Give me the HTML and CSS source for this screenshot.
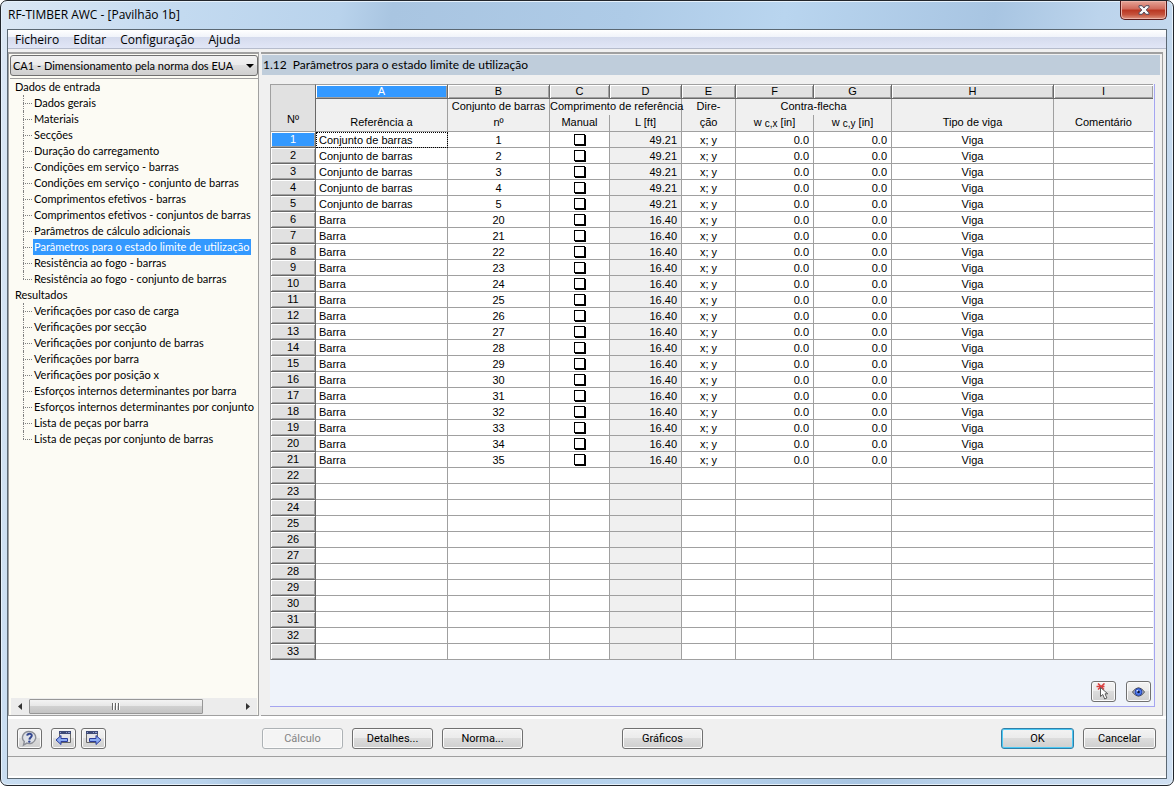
FILE: index.html
```html
<!DOCTYPE html>
<html lang="pt">
<head>
<meta charset="utf-8">
<title>RF-TIMBER AWC - [Pavilhão 1b]</title>
<link rel="stylesheet" href="styles.css">
</head>
<body>
<div class="window">
  <header class="titlebar">
    <h1 class="title">RF-TIMBER AWC - [Pavilhão 1b]</h1>
    <button class="close" type="button" aria-label="Fechar">
      <svg width="12" height="10" viewBox="0 0 12 10"><path d="M1 .7h3.2L6 3 7.800.7H11v1.500L8.200 5 11 7.800v1.500H7.800L6 7 4.200 9.300H1V7.800L3.800 5 1 2.200z" fill="#f8f8f8" stroke="#4d4a5c" stroke-width="1"/></svg>
    </button>
  </header>
  <div class="client">
    <nav class="menubar">
      <button type="button">Ficheiro</button>
      <button type="button">Editar</button>
      <button type="button">Configuração</button>
      <button type="button">Ajuda</button>
    </nav>
    <div class="body">
      <aside class="side">
        <div class="combo">
          <select aria-label="Caso de dimensionamento"><option>CA1 - Dimensionamento pela norma dos EUA</option></select>
        </div>
        <div class="tree">
          <p class="branch">Dados de entrada</p>
          <ul class="leaves">
            <li><a href="#">Dados gerais</a></li>
            <li><a href="#">Materiais</a></li>
            <li><a href="#">Secções</a></li>
            <li><a href="#">Duração do carregamento</a></li>
            <li><a href="#">Condições em serviço - barras</a></li>
            <li><a href="#">Condições em serviço - conjunto de barras</a></li>
            <li><a href="#">Comprimentos efetivos - barras</a></li>
            <li><a href="#">Comprimentos efetivos - conjuntos de barras</a></li>
            <li><a href="#">Parâmetros de cálculo adicionais</a></li>
            <li><a href="#" class="active">Parâmetros para o estado limite de utilização</a></li>
            <li><a href="#">Resistência ao fogo - barras</a></li>
            <li><a href="#">Resistência ao fogo - conjunto de barras</a></li>
          </ul>
          <p class="branch">Resultados</p>
          <ul class="leaves">
            <li><a href="#">Verificações por caso de carga</a></li>
            <li><a href="#">Verificações por secção</a></li>
            <li><a href="#">Verificações por conjunto de barras</a></li>
            <li><a href="#">Verificações por barra</a></li>
            <li><a href="#">Verificações por posição x</a></li>
            <li><a href="#">Esforços internos determinantes por barra</a></li>
            <li><a href="#">Esforços internos determinantes por conjunto de barras</a></li>
            <li><a href="#">Lista de peças por barra</a></li>
            <li><a href="#">Lista de peças por conjunto de barras</a></li>
          </ul>
        </div>
        <div class="scrollbar">
          <button type="button" aria-label="Esquerda"><svg width="4" height="7" viewBox="0 0 4 7"><path d="M4 0v7L0 3.500z" fill="#333"/></svg></button>
          <div class="track"><div class="thumb"><svg width="8" height="7" viewBox="0 0 8 7"><path d="M.5 0v7M3.500 0v7M6.500 0v7" stroke="#666"/><path d="M1.500 0v7M4.500 0v7M7.500 0v7" stroke="#fff"/></svg></div></div>
          <button type="button" aria-label="Direita"><svg width="4" height="7" viewBox="0 0 4 7"><path d="M0 0v7l4-3.500z" fill="#333"/></svg></button>
        </div>
      </aside>
      <main class="main">
        <h2 class="heading">1.12&nbsp; Parâmetros para o estado limite de utilização</h2>
        <div class="gridpanel">
          <table class="grid">
            <colgroup><col class="w-n"><col class="w-a"><col class="w-b"><col class="w-c"><col class="w-d"><col class="w-e"><col class="w-f"><col class="w-f"><col class="w-h"><col></colgroup>
            <thead>
              <tr class="letters"><th rowspan="3" class="corner">Nº</th><th class="picked">A</th><th>B</th><th>C</th><th>D</th><th>E</th><th>F</th><th>G</th><th>H</th><th>I</th></tr>
              <tr class="names"><th></th><th>Conjunto de barras</th><th colspan="2">Comprimento de referência</th><th>Dire-</th><th colspan="2">Contra-flecha</th><th></th><th></th></tr>
              <tr class="names last"><th>Referência a</th><th>nº</th><th>Manual</th><th>L [ft]</th><th>ção</th><th>w <sub>c,x</sub> [in]</th><th>w <sub>c,y</sub> [in]</th><th>Tipo de viga</th><th>Comentário</th></tr>
            </thead>
            <tbody id="rows"></tbody>
          </table>
          <div class="gridtools">
            <button class="btn icon" type="button" aria-label="Selecionar">
              <svg width="15" height="17" viewBox="0 0 15 17"><path d="M2 .5l6 6M8.500 .5L2 6.500M.5 3.500h8" stroke="#d94040" stroke-width="1.600"/><path d="M4.500 4.500v9l2.300-2 1.900 4.500 2.200-1-1.900-4.200h2.800z" fill="#fff" stroke="#5a5a5a"/></svg>
            </button>
            <button class="btn icon" type="button" aria-label="Ver">
              <svg width="13" height="10" viewBox="0 0 13 10"><path d="M.5 5Q6.500-3.500 12.500 5 6.500 13.500 .5 5z" fill="#b9bfd2" stroke="#444"/><circle cx="6.500" cy="5" r="3.500" fill="#4f7bee" stroke="#2743a6"/><circle cx="6.500" cy="5" r="1.300" fill="#0c1238"/><circle cx="5.300" cy="3.800" r=".7" fill="#fff"/></svg>
            </button>
          </div>
        </div>
      </main>
    </div>
    <footer class="actions">
      <div class="nav">
        <button class="btn icon help" type="button" aria-label="Ajuda">
          <svg width="17" height="17" viewBox="0 0 17 17"><path d="M8.500 1.500a6.500 6 0 1 1-2.600 11.600L2.500 15l.8-3.400A6.500 6 0 0 1 8.500 1.500z" fill="#dfe2e8" stroke="#8b8e96" stroke-width="1.400"/><path d="M6.200 5.600C6.500 3.200 10.900 3.200 10.800 5.600c0 1.900-2.300 1.900-2.400 4" fill="none" stroke="#33468f" stroke-width="2"/><circle cx="8.300" cy="11.600" r="1.200" fill="#33468f"/></svg>
        </button>
        <button class="btn icon" type="button" aria-label="Anterior">
          <svg width="17" height="17" viewBox="0 0 17 17"><path d="M4.500 2.500h11v10h-11z" fill="#e4e4e8" stroke="#666"/><path d="M4 1h12v3H4z" fill="#3e4a76"/><path d="M5 2.500h1M11 2.500h1M13 2.500h2" stroke="#8e9cd0"/><path d="M1 10L6 5.500v3h6.500v3H6v3z" fill="#8aaaf2" stroke="#2b3c9c"/></svg>
        </button>
        <button class="btn icon" type="button" aria-label="Seguinte">
          <svg width="17" height="17" viewBox="0 0 17 17"><path d="M1.500 2.500h11v10h-11z" fill="#e4e4e8" stroke="#666"/><path d="M1 1h12v3H1z" fill="#3e4a76"/><path d="M2 2.500h1M8 2.500h1M10 2.500h2" stroke="#8e9cd0"/><path d="M16 10L11 5.500v3H4.500v3H11v3z" fill="#8aaaf2" stroke="#2b3c9c"/></svg>
        </button>
      </div>
      <button class="btn" type="button" disabled>Cálculo</button>
      <button class="btn" type="button">Detalhes...</button>
      <button class="btn" type="button">Norma...</button>
      <button class="btn graphics" type="button">Gráficos</button>
      <div class="confirm">
        <button class="btn default" type="button">OK</button>
        <button class="btn" type="button">Cancelar</button>
      </div>
    </footer>
    <div class="status"></div>
  </div>
</div>
<script src="grid.js"></script>
</body>
</html>
```
FILE: styles.css
```css
* { box-sizing: border-box; }
body {
  margin: 0;
  background: #fff;
  color: #000;
  font: 11px/16px Roboto, "Noto Sans", sans-serif;
}
button, select, input { font: inherit; color: inherit; margin: 0; }
h1, h2, p, ul { margin: 0; padding: 0; font-weight: normal; }
ul { list-style: none; }
svg { display: block; }

.window {
  display: flex;
  flex-direction: column;
  height: 100vh;
  padding: 0 6px 6px;
  border: 1px solid #22262c;
  border-radius: 7px;
  background: linear-gradient(100deg, #dbe7f4 0, #c3daf0 14%, #b9d3ec 26%, #a9c5e1 30%, #aecbe7 48%, #b9d5ef 60%, #a8c5e2 76%, #bcd4ec 84%, #d0e0f2 100%);
  box-shadow: inset 0 0 0 1px #e6f1fb;
}
.titlebar {
  display: flex;
  justify-content: space-between;
  align-items: center;
  flex: none;
  height: 28px;
}
.title { font: 12px/16px "Open Sans", sans-serif; padding-left: 1px; }
.close {
  display: grid;
  place-items: center;
  align-self: flex-start;
  width: 47px;
  height: 19px;
  padding: 0;
  border: 1px solid #571b1b;
  border-top: 0;
  border-radius: 0 0 5px 5px;
  background: linear-gradient(#e6a497, #d0695a 45%, #b93621 50%, #c5523c 75%, #dd9480);
  box-shadow: inset 0 0 0 1px #ecb3a8;
}
.client {
  display: flex;
  flex-direction: column;
  flex: 1;
  min-height: 0;
  border: 1px solid #5b6873;
  background: #f0f0f0;
}
.menubar {
  display: flex;
  flex: none;
  height: 19px;
  border-bottom: 1px solid #b6bccc;
  background: linear-gradient(#fff 0, #f1f4fa 38%, #d5dbed 40%, #e1e6f6 100%);
}
.menubar button {
  padding: 2px 7px 0;
  border: 0;
  background: none;
  font: 12px/16px "Open Sans", sans-serif;
}
.body { display: flex; flex: 1; min-height: 0; padding: 3px 3px 0 0; border-bottom: 3px solid #fff; }

.side {
  display: flex;
  flex-direction: column;
  flex: none;
  width: 251px;
  padding: 1px 0 0 1px;
  border: 1px solid #a0a0a0;
  border-top-width: 2px;
  background: #fcfbf4;
}
.combo { position: relative; flex: none; border-bottom: 1px solid #a0a0a0; padding-bottom: 2px; }
.combo select {
  display: block;
  width: 100%;
  height: 21px;
  padding: 0 20px 0 2px;
  appearance: none;
  border: 1px solid #707070;
  border-radius: 3px;
  background: linear-gradient(#f2f2f2, #ebebeb 48%, #ddd 50%, #cfcfcf);
  font-family: Lato, "Noto Sans", sans-serif;
}
.combo::after {
  content: "";
  position: absolute;
  right: 4px;
  top: 9px;
  border: 4px solid transparent;
  border-top-color: #000;
  border-bottom: 0;
  pointer-events: none;
}
.tree {
  flex: 1;
  min-height: 0;
  padding: 0 2px 0 1px;
  overflow: hidden;
  white-space: nowrap;
  font-family: Lato, "Noto Sans", sans-serif;
}
.branch { padding-left: 4px; }
.leaves { padding-left: 12px; }
.leaves li { position: relative; display: flex; padding-left: 10px; }
.leaves li::before {
  content: "";
  position: absolute;
  left: 0;
  top: 0;
  width: 9px;
  height: 100%;
  border-left: 1px dotted #808080;
}
.leaves li:last-child::before { height: 8px; }
.leaves li::after {
  content: "";
  position: absolute;
  left: 0;
  top: 8px;
  width: 9px;
  border-top: 1px dotted #808080;
}
.leaves a { min-width: 0; overflow: hidden; padding: 0 1px; color: #000; text-decoration: none; }
.leaves .active { background: #3399ff; color: #fff; }

.scrollbar { display: flex; flex: none; height: 17px; margin: 0 1px; background: #ececec; }
.scrollbar button {
  display: grid;
  place-items: center;
  width: 18px;
  padding: 0;
  border: 0;
  background: none;
}
.track { flex: 1; display: flex; padding: 1px 0; }
.thumb {
  display: grid;
  place-items: center;
  width: 83%;
  border: 1px solid #979797;
  border-radius: 1px;
  background: linear-gradient(#f3f3f3, #e6e6e6 48%, #d0d0d0 50%, #c4c4c4);
}

.main {
  display: flex;
  flex-direction: column;
  flex: 1;
  min-width: 0;
  margin-left: 2px;
  padding: 1px 2px 8px 1px;
  border: 1px solid #a0a0a0;
  border-width: 2px 1px 1px 0;
}
.heading {
  flex: none;
  padding: 0 1px;
  background: #bfcddb;
  font-family: Lato, "Noto Sans", sans-serif;
  font-size: 12px;
  line-height: 20px;
}
.gridpanel {
  display: flex;
  flex-direction: column;
  flex: 1;
  min-height: 0;
  margin: 9px 5px 0 8px;
  border: 1px solid #a5a5f0;
  border-width: 0 1px 1px 0;
  background: #eff3fa;
}
.grid {
  flex: none;
  width: calc(100% - 1px);
  table-layout: fixed;
  border-collapse: separate;
  border-spacing: 0;
  border-left: 1px solid #a0a0a0;
  background: #fff;
  font-family: "Liberation Sans", Arial, sans-serif;
  line-height: 14px;
}
.w-n { width: 45px; }
.w-a { width: 132px; }
.w-b { width: 102px; }
.w-c { width: 60px; }
.w-d { width: 72px; }
.w-e { width: 54px; }
.w-f { width: 78px; }
.w-h { width: 162px; }
.grid th, .grid td {
  height: 16px;
  padding: 0;
  border: 0 solid #a0a0a0;
  border-width: 0 1px 1px 0;
  font-weight: normal;
  text-align: center;
  vertical-align: top;
  white-space: nowrap;
}
.grid tbody td { padding-top: 1px; }
.grid tr > :last-child { border-right: 0; }
.grid .letters th {
  height: 15px;
  line-height: 13px;
  border-color: #a0a0a0 #696969 #696969 #fff;
  border-top-width: 1px;
  background: #e1e1e1;
  box-shadow: inset 1px 1px #fff, inset -1px -1px #a0a0a0;
}
.grid .letters .picked { background: #3399ff; color: #fff; }
.grid .letters .corner {
  vertical-align: bottom;
  padding-bottom: 5px;
  border-bottom-color: #a0a0a0;
  box-shadow: none;
}
.grid .names th { background: #f0f0f0; border-bottom: 0; }
.grid .names.last th { height: 17px; border-bottom: 1px solid #a0a0a0; }
.grid sub { font-size: 10px; line-height: 0; vertical-align: -1px; }
.grid tbody th {
  border-color: #696969;
  background: #e1e1e1;
  box-shadow: inset 1px 1px #fff, inset -1px -1px #a0a0a0;
}
.grid tbody .picked { background: #3399ff; color: #fff; }
.grid td:nth-child(2) { text-align: left; padding-left: 3px; }
.grid td:nth-child(5) { background: #f0f0f0; }
.grid td:nth-child(5), .grid td:nth-child(7), .grid td:nth-child(8) { text-align: right; padding-right: 4px; }
.grid .focused { outline: 1px dotted #000; outline-offset: -1px; }
.grid input {
  display: block;
  width: 11px;
  height: 11px;
  margin: 1px auto 0;
  appearance: none;
  border: 1px solid #000;
  background: #fff;
  box-shadow: 1px 1px #000;
}
.gridtools { display: flex; justify-content: flex-end; gap: 10px; margin-top: auto; padding: 0 3px 4px; }

.btn {
  width: 81px;
  height: 21px;
  padding: 0;
  border: 1px solid #707070;
  border-radius: 3px;
  background: linear-gradient(#f3f3f3, #ebebeb 48%, #dcdcdc 50%, #cfcfcf);
  box-shadow: inset 0 0 0 1px #fbfbfb;
}
.btn:disabled { border-color: #adb2b5; background: #f4f4f4; color: #838383; }
.btn.icon { display: grid; place-items: center; width: 25px; }
.btn.default { border-color: #2f7fa8; box-shadow: inset 0 0 0 1px #4cc9f5; }
.actions {
  display: flex;
  align-items: center;
  flex: none;
  gap: 9px;
  height: 38px;
  padding: 2px 10px 0 9px;
  border-bottom: 1px solid #a0a0a0;
}
.nav { display: flex; gap: 5px; width: 236px; }
.help { margin-right: 4px; }
.graphics { margin-left: 90px; }
.confirm { display: flex; gap: 9px; margin-left: auto; }
.confirm .btn { width: 73px; }
.status { flex: none; height: 21px; border-bottom: 2px solid #fff; }
```
FILE: grid.js
```js
const body = document.getElementById("rows");
const TOTAL_ROWS = 33;

function record(n) {
  if (n <= 5) return ["Conjunto de barras", n, "49.21"];
  if (n <= 21) return ["Barra", n + 14, "16.40"];
  return null;
}

for (let n = 1; n <= TOTAL_ROWS; n++) {
  const row = body.insertRow();
  const head = document.createElement("th");
  head.textContent = n;
  if (n === 1) head.className = "picked";
  row.append(head);
  const data = record(n);
  const values = data
    ? [data[0], data[1], "", data[2], "x; y", "0.0", "0.0", "Viga", ""]
    : Array(9).fill("");
  values.forEach((value, i) => {
    const cell = row.insertCell();
    cell.textContent = value;
    if (data && i === 2) {
      const box = document.createElement("input");
      box.type = "checkbox";
      box.setAttribute("aria-label", "Manual, linha " + n);
      cell.append(box);
    }
    if (n === 1 && i === 0) cell.className = "focused";
  });
}
```
